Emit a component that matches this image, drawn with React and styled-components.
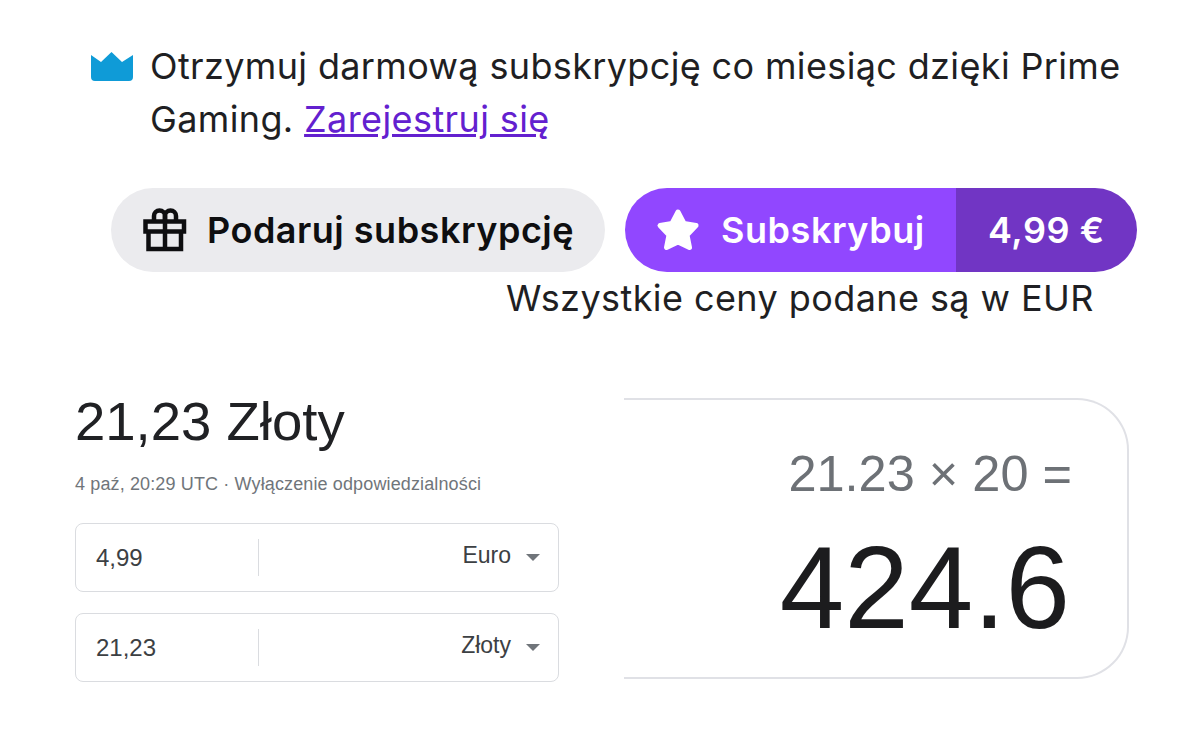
import styled, { createGlobalStyle } from "styled-components";

const Global = createGlobalStyle`
  html, body {
    margin: 0;
    padding: 0;
    background: #fff;
  }
`;

const Page = styled.div`
  width: 1200px;
  height: 732px;
  overflow: hidden;
  display: flex;
  flex-direction: column;
  box-sizing: border-box;
  padding-top: 39px;
`;

const Promo = styled.div`
  display: flex;
  align-items: flex-start;
  gap: 16px;
  padding-left: 90px;
  width: 1040px;
`;

const PromoText = styled.p`
  margin: 1px 0 0;
  font-family: Inter, sans-serif;
  font-size: 36px;
  letter-spacing: 0.36px;
  line-height: 53px;
  color: #1f1f23;
`;

const Link = styled.a`
  color: #6320cf;
  letter-spacing: 0.4px;
  text-decoration: underline;
`;

const Crown = styled.svg`
  width: 44px;
  height: 30px;
  margin-top: 13px;
  flex: none;
`;

const Buttons = styled.div`
  display: flex;
  gap: 20px;
  padding-left: 111px;
  margin-top: 42px;
`;

const GiftButton = styled.div`
  width: 494px;
  height: 84px;
  border-radius: 42px;
  background: #ebebee;
  color: #0e0e10;
  display: flex;
  align-items: center;
  gap: 20px;
  padding-left: 32px;
  box-sizing: border-box;
  font-family: Inter, sans-serif;
  font-weight: 600;
  font-size: 36px;
  letter-spacing: 0.5px;
`;

const SubButton = styled.div`
  width: 512px;
  height: 84px;
  border-radius: 42px;
  overflow: hidden;
  display: flex;
  font-family: Inter, sans-serif;
  font-weight: 600;
  font-size: 36px;
  letter-spacing: 0.55px;
  color: #fff;
`;

const SubLabel = styled.div`
  width: 331px;
  background: #9147ff;
  display: flex;
  align-items: center;
  gap: 21px;
  padding-left: 31px;
  box-sizing: border-box;
`;

const Price = styled.div`
  flex: 1;
  background: #7135c4;
  display: flex;
  align-items: center;
  padding-left: 32px;
`;

const Note = styled.div`
  margin: 5px 0 0 506px;
  font-family: Inter, sans-serif;
  font-size: 36px;
  letter-spacing: 0.42px;
  line-height: 42px;
  color: #1f1f23;
`;

const Bottom = styled.div`
  display: flex;
  margin-top: 81px;
  padding-left: 75px;
`;

const Converter = styled.div`
  width: 484px;
  margin-right: 65px;
  font-family: "Liberation Sans", Arial, sans-serif;
`;

const Amount = styled.div`
  font-size: 54.5px;
  line-height: 70px;
  color: #202124;
  margin-top: -13px;
`;

const Stamp = styled.div`
  font-size: 18px;
  letter-spacing: 0.13px;
  line-height: 20px;
  color: #70757a;
  margin-top: 17px;
`;

const Field = styled.div`
  height: 69px;
  box-sizing: border-box;
  border: 1px solid #dadce0;
  border-radius: 8px;
  display: flex;
  align-items: center;
  margin-top: ${(p) => p.$gap}px;
  color: #3c4043;
`;

const Value = styled.div`
  width: 183px;
  height: 37px;
  line-height: 37px;
  padding-left: 20px;
  box-sizing: border-box;
  border-right: 1px solid #dadce0;
  font-size: 24px;
`;

const Unit = styled.div`
  flex: 1;
  display: flex;
  align-items: center;
  justify-content: flex-end;
  gap: 15px;
  padding-right: 18px;
  font-size: 23px;
`;

const UnitName = styled.span`
  margin-top: -4px;
`;

const Caret = styled.span`
  width: 0;
  height: 0;
  border-left: 7px solid transparent;
  border-right: 7px solid transparent;
  border-top: 7px solid #70757a;
`;

const Card = styled.div`
  width: 505px;
  height: 281px;
  box-sizing: border-box;
  border: 2px solid #e0e1e6;
  border-left: none;
  border-radius: 0 52px 52px 0;
  margin-top: -2px;
  display: flex;
  flex-direction: column;
  align-items: flex-end;
  padding: 43px 57px 0 0;
  font-family: "Liberation Sans", Arial, sans-serif;
`;

const Expression = styled.div`
  font-size: 50.5px;
  line-height: 62px;
  color: #6d7176;
  margin-right: -2px;
`;

const Result = styled.div`
  font-size: 116px;
  line-height: 130px;
  margin-top: 18px;
  color: #1c1c1e;
`;

export default function App() {
  return (
    <Page>
      <Global />
      <Promo>
        <Crown viewBox="0 0 44 30">
          <path
            fill="#0f9bd7"
            d="M1 3 L11 10 L21.5 0 L32 10 L43 3 V25 Q43 29 39 29 H5 Q1 29 1 25 Z"
          />
        </Crown>
        <PromoText>
          Otrzymuj darmową subskrypcję co miesiąc dzięki Prime Gaming.{" "}
          <Link>Zarejestruj się</Link>
        </PromoText>
      </Promo>
      <Buttons>
        <GiftButton>
          <svg width="44" height="44" viewBox="0 0 44 44" fill="none" stroke="#0e0e10" strokeWidth="4.5">
            <path d="M2.5 13.5 H41 V23.5 H2.5 Z" />
            <path d="M5.5 23.5 V41 H38 V23.5" />
            <path d="M22 13.5 V41" />
            <path d="M22 13.5 V8 A5.5 5.5 0 0 0 11 8 V13.5" />
            <path d="M22 13.5 V8 A5.5 5.5 0 0 1 33 8 V13.5" />
          </svg>
          Podaruj subskrypcję
        </GiftButton>
        <SubButton>
          <SubLabel>
            <svg width="44" height="44" viewBox="0 0 44 44">
              <path
                fill="#fff"
                stroke="#fff"
                strokeWidth="5"
                strokeLinejoin="round"
                d="M22 4 L28 15.5 L40 17.5 L31 27 L33.5 39.5 L22 34 L10.5 39.5 L13 27 L4 17.5 L16 15.5 Z"
              />
            </svg>
            Subskrybuj
          </SubLabel>
          <Price>4,99 €</Price>
        </SubButton>
      </Buttons>
      <Note>Wszystkie ceny podane są w EUR</Note>
      <Bottom>
        <Converter>
          <Amount>21,23 Złoty</Amount>
          <Stamp>4 paź, 20:29 UTC · Wyłączenie odpowiedzialności</Stamp>
          <Field $gap={29}>
            <Value>4,99</Value>
            <Unit>
              <UnitName>Euro</UnitName>
              <Caret />
            </Unit>
          </Field>
          <Field $gap={21}>
            <Value>21,23</Value>
            <Unit>
              <UnitName>Złoty</UnitName>
              <Caret />
            </Unit>
          </Field>
        </Converter>
        <Card>
          <Expression>21.23 × 20 =</Expression>
          <Result>424.6</Result>
        </Card>
      </Bottom>
    </Page>
  );
}
